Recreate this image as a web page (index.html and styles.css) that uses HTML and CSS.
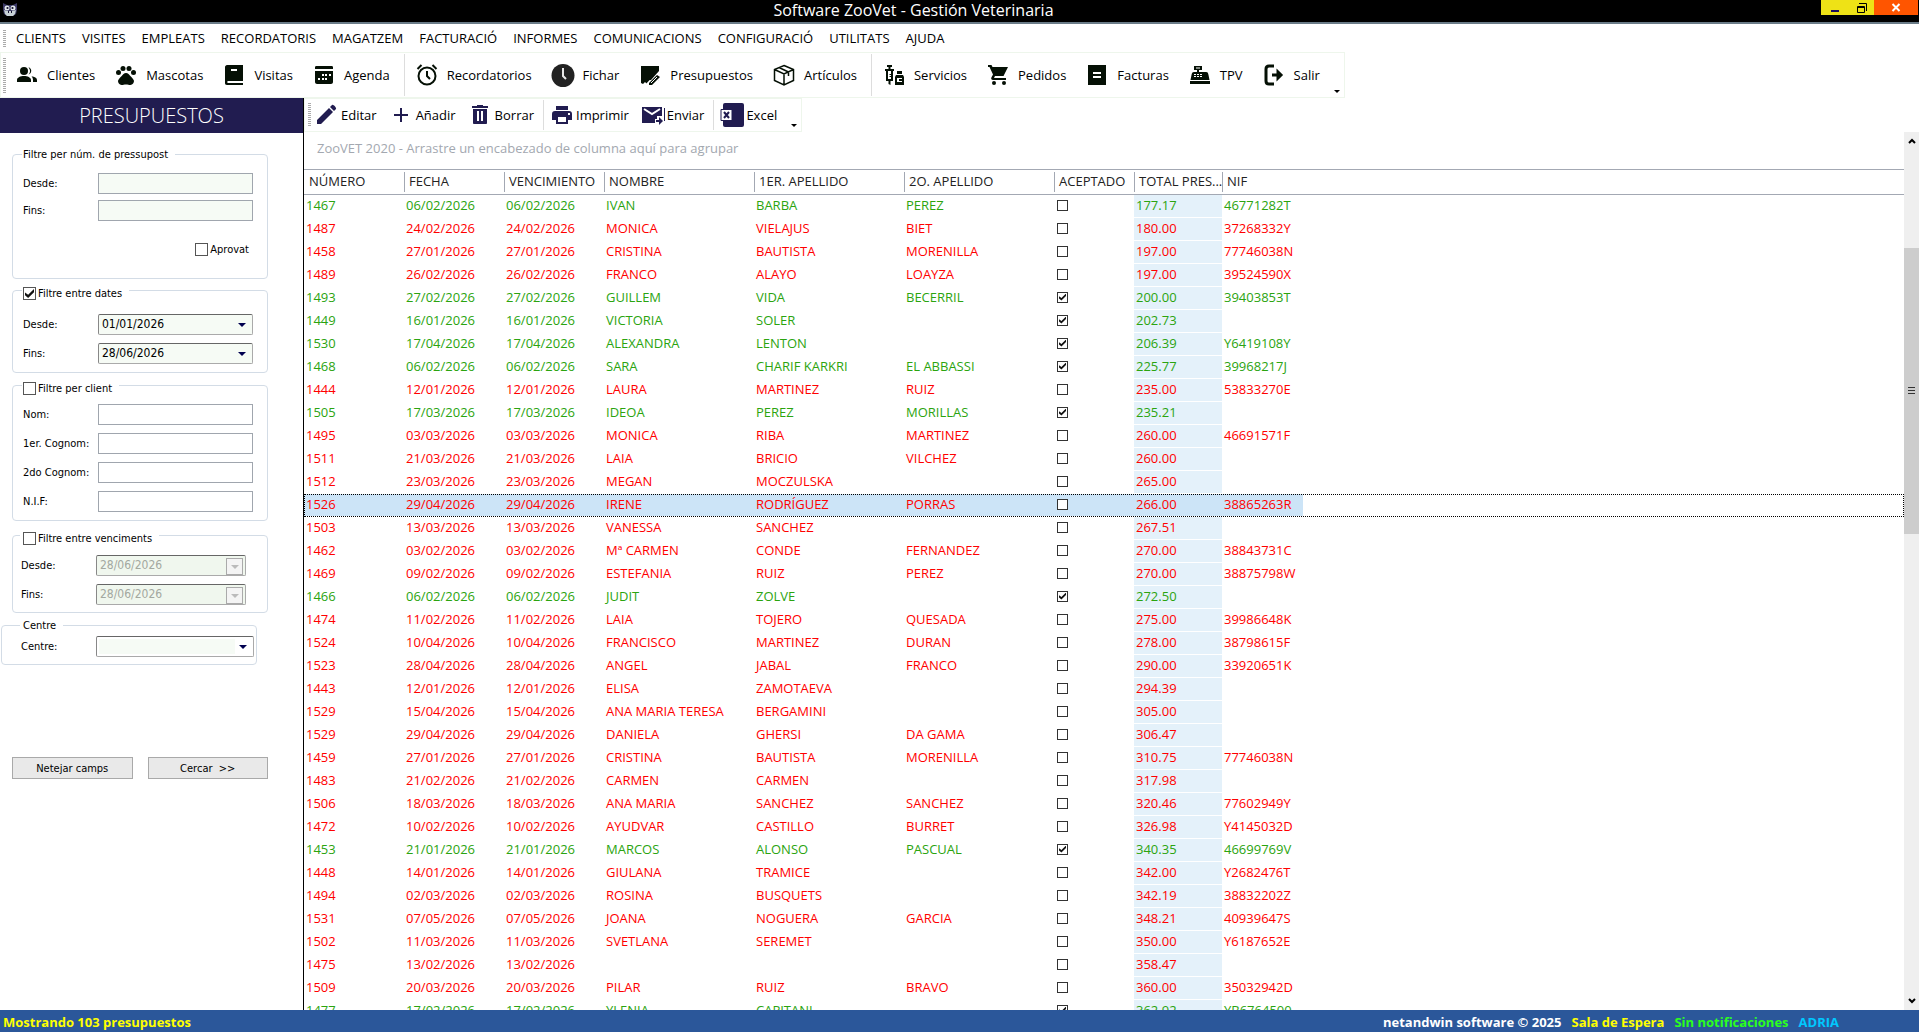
FILE: index.html
```html
<!DOCTYPE html>
<html lang="ca">
<head>
	<meta charset="utf-8">
	<title>Software ZooVet - Gestión Veterinaria</title>
	<link rel="stylesheet" href="styles.css">
</head>

<body>
	<header class="titlebar">
		<svg class="logo" viewBox="0 0 16 16">
			<path fill="#3c3a66" d="M1 2l4 2h6l4-2v7l-1 4-3 2H5l-3-2-1-4z"/>
			<path fill="#c9d2d6" d="M2 9l3 1h6l3-1-1 4-2 2H5l-2-2z"/>
			<circle cx="5" cy="7" r="2.500" fill="#e4eaec"/>
			<circle cx="11" cy="7" r="2.500" fill="#e4eaec"/>
			<circle cx="5.500" cy="7" r="1.100" fill="#15132f"/>
			<circle cx="10.500" cy="7" r="1.100" fill="#15132f"/>
			<path fill="#15132f" d="M6 10h1v2H6zM9 10h1v2H9z"/>
		</svg>
		<h1>Software ZooVet - Gestión Veterinaria</h1>
		<div class="window-buttons">
			<button type="button" class="win-min" aria-label="Minimizar">
				<svg viewBox="0 0 12 12"><path fill="#1c0f5c" d="M2 8h8v2H2z"/></svg>
			</button>
			<button type="button" class="win-max" aria-label="Restaurar">
				<svg viewBox="0 0 12 12"><path fill="none" stroke="#000" d="M3 1.500h7.500V9M1.500 4.500h7v6h-7zM1 5.500h8"/></svg>
			</button>
			<button type="button" class="win-close" aria-label="Cerrar">
				<svg viewBox="0 0 12 12"><path fill="none" stroke="#fff" stroke-width="2" d="M2.500 2l7 7M9.500 2l-7 7"/></svg>
			</button>
		</div>
	</header>

	<nav class="menu">
		<span class="grip"></span>
		<a href="#">CLIENTS</a>
		<a href="#">VISITES</a>
		<a href="#">EMPLEATS</a>
		<a href="#">RECORDATORIS</a>
		<a href="#">MAGATZEM</a>
		<a href="#">FACTURACIÓ</a>
		<a href="#">INFORMES</a>
		<a href="#">COMUNICACIONS</a>
		<a href="#">CONFIGURACIÓ</a>
		<a href="#">UTILITATS</a>
		<a href="#">AJUDA</a>
	</nav>

	<div class="toolbar main-toolbar">
		<span class="grip"></span>
		<button type="button">
			<svg viewBox="0 0 24 24"><circle cx="9" cy="8" r="4"/><path d="M13.500 4.200a4 4 0 0 1 0 7.600 6 6 0 0 0 0-7.600zM2 19v-2c0-2.500 3.500-4 7-4s7 1.500 7 4v2zM16.500 13.200c3 .4 5.500 1.600 5.500 3.800v2h-4v-2c0-1.600-.6-2.800-1.500-3.800z"/></svg>
			Clientes
		</button>
		<button type="button">
			<svg viewBox="0 0 24 24"><circle cx="4.500" cy="9.500" r="2.500"/><circle cx="9" cy="5.500" r="2.500"/><circle cx="15" cy="5.500" r="2.500"/><circle cx="19.500" cy="9.500" r="2.500"/><path d="M12 10c2 0 3.200 1.600 4.300 2.900 1.300 1.500 3.200 2.800 3.600 4.700.4 2.200-1.300 4.400-3.500 4.400-1.500 0-2.600-.5-4.400-.5s-2.900.5-4.400.5c-2.200 0-3.900-2.200-3.500-4.400.4-1.900 2.300-3.200 3.600-4.700C8.800 11.600 10 10 12 10z"/></svg>
			Mascotas
		</button>
		<button type="button">
			<svg viewBox="0 0 24 24"><path fill-rule="evenodd" d="M5 2h16v16H6c-1 0-1 2 0 2h15v2H5c-1.500 0-2-1-2-2V4c0-1 1-2 2-2zM9 6v2h6V6z"/></svg>
			Visitas
		</button>
		<button type="button">
			<svg viewBox="0 0 24 24"><path fill-rule="evenodd" d="M3 6V4c0-1 1-1 2-1h14c1 0 2 0 2 1v2zM3 8h18v11c0 1-1 2-2 2H5c-1 0-2-1-2-2zM10 11v2h2v-2zM13 11v2h2v-2zM17 11v2h2v-2zM6 15v2h2v-2zM10 15v2h2v-2zM13 15v2h2v-2z"/></svg>
			Agenda
		</button>
		<span class="sep"></span>
		<button type="button">
			<svg viewBox="0 0 24 24" class="line"><circle cx="12" cy="13" r="8.500"/><path d="M12 8v5l3 3M2.500 6l4-4M21.500 6l-4-4"/></svg>
			Recordatorios
		</button>
		<button type="button">
			<svg viewBox="0 0 24 24"><circle cx="12" cy="12.500" r="11.500" fill="#222"/><path fill="none" stroke="#e8e8e8" stroke-width="2" d="M12 5v8l3 3"/></svg>
			Fichar
		</button>
		<button type="button">
			<svg viewBox="0 0 24 24"><path d="M3 3h18v14l-8 4-2-1-2 1-2-2-2 2-2-1z"/><path fill="none" stroke="#fff" stroke-width="7" d="M23 10L10 24"/><path d="M19 12l3 2-8 8h-3v-2zM3 3h18v5l-8 9H3z"/><path fill="none" stroke="#fff" d="M13 20l6-6"/></svg>
			Presupuestos
		</button>
		<button type="button">
			<svg viewBox="0 0 24 24" class="line thin"><path d="M12 2.500l9.500 4v11L12 22l-9.500-4.500v-11zM2.500 6.500L12 11l9.500-4.500M12 11v11M7 4.500l9.500 4.500v4"/></svg>
			Artículos
		</button>
		<span class="sep"></span>
		<button type="button">
			<svg viewBox="0 0 24 24"><path fill-rule="evenodd" d="M5 2h5v2H8.500v2H12v2h-1v10H8.500v4l-2-1v-3H4V8H3V6h3.500V4H5zM6 8v8h3v-2H7.500v-1H9v-1H7.500v-1H9V8zM15 8h5v3h-5zM14 12h7l1 2v8h-9v-8zM15 15v4h5v-1h-3v-2h3v-1z"/></svg>
			Servicios
		</button>
		<button type="button">
			<svg viewBox="0 0 24 24"><circle cx="8" cy="20" r="2"/><circle cx="18" cy="20" r="2"/><path d="M2 2h3.500l1 2H22l-4.500 9H9l-1 2h12v2H7c-1.500 0-2.300-1.500-1.500-2.800L7 11.500 3.500 4H2z"/></svg>
			Pedidos
		</button>
		<button type="button">
			<svg viewBox="0 0 24 24"><path fill-rule="evenodd" d="M3 2h18v20H3zM8 9v2h8V9zM8 13v2h8v-2z"/></svg>
			Facturas
		</button>
		<button type="button">
			<svg viewBox="0 0 24 24"><path fill-rule="evenodd" d="M2 18h20v3H2zM6 3h8v4h-3v2h7c2 0 2 1 2.500 3l1 5h-19l1-5c.4-2 .8-3 2.500-3h3V7H6zM8 4.500v1h4v-1zM6 11v1h2v-1zM9 11v1h2v-1zM12 11v1h2v-1zM6 13v1h2v-1zM9 13v1h2v-1zM12 13v1h2v-1z"/></svg>
			TPV
		</button>
		<button type="button">
			<svg viewBox="0 0 24 24" class="line bold"><path d="M12 3H7C5 3 4 4 4 6v12c0 2 1 3 3 3h5M10 12h8M16 9l3 3-3 3z"/></svg>
			Salir
		</button>
		<span class="overflow"></span>
	</div>

	<main>
		<aside>
			<h2>PRESUPUESTOS</h2>
			<form>
				<fieldset class="numbers">
					<legend>Filtre per núm. de pressupost</legend>
					<div class="field">
						<label for="num_desde">Desde:</label>
						<input type="text" id="num_desde">
					</div>
					<div class="field">
						<label for="num_fins">Fins:</label>
						<input type="text" id="num_fins">
					</div>
					<div class="approved">
						<input type="checkbox" id="aprovat">
						<label for="aprovat">Aprovat</label>
					</div>
				</fieldset>

				<fieldset class="dates">
					<legend class="check">
						<input type="checkbox" id="f_dates" checked>
						<label for="f_dates">Filtre entre dates</label>
					</legend>
					<div class="field">
						<label for="data_desde">Desde:</label>
						<span class="combo"><select id="data_desde"><option>01/01/2026</option></select></span>
					</div>
					<div class="field">
						<label for="data_fins">Fins:</label>
						<span class="combo"><select id="data_fins"><option>28/06/2026</option></select></span>
					</div>
				</fieldset>

				<fieldset class="client">
					<legend class="check">
						<input type="checkbox" id="f_client">
						<label for="f_client">Filtre per client</label>
					</legend>
					<div class="field">
						<label for="nom">Nom:</label>
						<input type="text" id="nom">
					</div>
					<div class="field">
						<label for="cognom1">1er. Cognom:</label>
						<input type="text" id="cognom1">
					</div>
					<div class="field">
						<label for="cognom2">2do Cognom:</label>
						<input type="text" id="cognom2">
					</div>
					<div class="field">
						<label for="nif">N.I.F:</label>
						<input type="text" id="nif">
					</div>
				</fieldset>

				<fieldset class="due">
					<legend class="check">
						<input type="checkbox" id="f_venc">
						<label for="f_venc">Filtre entre venciments</label>
					</legend>
					<div class="field">
						<label for="venc_desde">Desde:</label>
						<span class="combo off"><select id="venc_desde" disabled><option>28/06/2026</option></select></span>
					</div>
					<div class="field">
						<label for="venc_fins">Fins:</label>
						<span class="combo off"><select id="venc_fins" disabled><option>28/06/2026</option></select></span>
					</div>
				</fieldset>

				<fieldset class="centre">
					<legend>Centre</legend>
					<div class="field">
						<label for="centre">Centre:</label>
						<span class="combo"><select id="centre"><option></option></select></span>
					</div>
				</fieldset>

				<div class="actions">
					<button type="reset">Netejar camps</button>
					<button type="button">Cercar &nbsp;&gt;&gt;</button>
				</div>
			</form>
		</aside>

		<section class="content">
			<div class="toolbar sub-toolbar">
				<span class="grip"></span>
				<button type="button">
					<svg viewBox="0 0 24 24"><path d="M3 17L15 5l4 4L7 21H3zM16 4l2-2c1-1 5 3 4 4l-2 2z"/></svg>
					Editar
				</button>
				<button type="button">
					<svg viewBox="0 0 24 24"><path d="M11 5h2v6h6v2h-6v6h-2v-6H5v-2h6z"/></svg>
					Añadir
				</button>
				<button type="button">
					<svg viewBox="0 0 24 24"><path fill-rule="evenodd" d="M4 3h5V2h6v1h5v2H4zM5 6h14v14c0 1-1 1-1 1H6s-1 0-1-1zM9 8v10h2V8zM13 8v10h2V8z"/></svg>
					Borrar
				</button>
				<span class="sep"></span>
				<button type="button" class="tight">
					<svg viewBox="0 0 24 24"><path fill-rule="evenodd" d="M6 3h12v4H6zM5 8h14c2 0 3 1 3 3v6h-4v4H6v-4H2v-6c0-2 1-3 3-3zM8 14v5h8v-5zM18 10v2h2v-2z"/></svg>
					Imprimir
				</button>
				<button type="button" class="tight">
					<svg viewBox="0 0 24 24"><path d="M1 4h20v9h-5v3h-2v4H1z"/><path fill="none" stroke="#fff" stroke-width="2" d="M3 6l8 5 8-5"/><path d="M15 17h3v-3l4 4-4 4v-3h-3zM23 5h1v13h-1z"/></svg>
					Enviar
				</button>
				<span class="sep"></span>
				<button type="button" class="tight">
					<svg viewBox="0 0 24 24"><rect x="3" width="21" height="24" rx="2"/><path fill="#fff" stroke="#211c50" d="M1 6.500h11v11H1z"/><path stroke="#211c50" stroke-width="2" d="M4 9l5 6M9 9l-5 6"/></svg>
					Excel
				</button>
				<span class="overflow"></span>
			</div>

			<div class="grid">
				<div class="grid-body">
					<p class="group-hint">ZooVET 2020 - Arrastre un encabezado de columna aquí para agrupar</p>
					<table>
						<colgroup>
							<col class="c-date"><col class="c-date"><col class="c-date">
							<col class="c-name"><col class="c-name"><col class="c-name">
							<col class="c-ok"><col class="c-total"><col class="c-nif"><col>
						</colgroup>
						<thead>
							<tr>
								<th>NÚMERO</th>
								<th>FECHA</th>
								<th>VENCIMIENTO</th>
								<th>NOMBRE</th>
								<th>1ER. APELLIDO</th>
								<th>2O. APELLIDO</th>
								<th>ACEPTADO</th>
								<th>TOTAL PRES...</th>
								<th>NIF</th>
								<th></th>
							</tr>
						</thead>
						<tbody id="rows"></tbody>
					</table>
				</div>
				<div class="scrollbar">
					<svg viewBox="0 0 8 6"><path d="M1 5l3-3 3 3"/></svg>
					<div class="thumb"><span></span></div>
					<svg viewBox="0 0 8 6"><path d="M1 1l3 3 3-3"/></svg>
				</div>
			</div>
		</section>
	</main>

	<footer>
		<span class="count">Mostrando 103 presupuestos</span>
		<span>netandwin software © 2025</span>
		<span class="yellow">Sala de Espera</span>
		<span class="green">Sin notificaciones</span>
		<span class="cyan">ADRIA</span>
	</footer>
	<script src="rows.js"></script>
</body>
</html>
```

FILE: styles.css
```css
* {
	box-sizing: border-box;
}

body {
	display: flex;
	flex-direction: column;
	height: 100vh;
	margin: 0;
	overflow: hidden;
	background: #fff;
	color: #000;
	font-family: "Open Sans", "Noto Sans", sans-serif;
	font-size: 13px;
}

button, input, select {
	font: inherit;
	color: inherit;
	margin: 0;
}

/* title bar */
.titlebar {
	position: relative;
	display: flex;
	justify-content: center;
	flex: none;
	height: 24px;
	padding-right: 92px;
	background: #000;
	border-bottom: 2px solid #6b7c88;
	color: #fff;
}

.titlebar h1 {
	margin: 0;
	font-size: 16px;
	font-weight: normal;
	line-height: 20px;
}

.logo {
	position: absolute;
	left: 2px;
	top: 1px;
	width: 16px;
	height: 16px;
}

.window-buttons {
	position: absolute;
	top: 0;
	right: 1px;
	display: flex;
}

.window-buttons button {
	display: flex;
	align-items: center;
	justify-content: center;
	height: 15px;
	padding: 0;
	border: none;
	background: #eee216;
}

.window-buttons svg {
	width: 12px;
	height: 12px;
}

.window-buttons .win-min {
	width: 28px;
}

.window-buttons .win-max {
	width: 25px;
}

.window-buttons .win-close {
	width: 44px;
	background: #ff5500;
}

/* menu */
.menu {
	display: flex;
	align-items: center;
	flex: none;
	gap: 16px;
	height: 28px;
	padding-left: 3px;
}

.menu a {
	color: #000;
	text-decoration: none;
}

.grip {
	flex: none;
	width: 3px;
	height: 17px;
	background: repeating-linear-gradient(#aaa 0 1px, #fff 1px 2px);
}

.menu .grip {
	margin-right: -6px;
}

/* toolbars */
.toolbar {
	display: flex;
	align-items: center;
	flex: none;
	align-self: flex-start;
	border: 1px solid #eef6ec;
}

.toolbar button {
	display: flex;
	align-items: center;
	gap: 8px;
	padding: 0 9px 0 10px;
	border: none;
	background: none;
	white-space: nowrap;
}

.toolbar svg {
	width: 24px;
	height: 24px;
	fill: #051005;
}

.toolbar svg.line {
	fill: none;
	stroke: #051005;
	stroke-width: 2;
}

.toolbar svg.thin {
	stroke-width: 1.5;
}

.toolbar svg.bold {
	stroke-width: 3;
}

.main-toolbar {
	height: 46px;
	padding: 0 4px 0 2px;
}

.main-toolbar .grip {
	height: 35px;
	margin-right: -1px;
}

.sep {
	align-self: stretch;
	width: 1px;
	margin: 1px 0 1px 5px;
	background: #ddd;
}

.overflow {
	align-self: flex-end;
	margin: 0 0 4px 5px;
	border: 3px solid transparent;
	border-top-color: #000;
	border-bottom: none;
}

.sub-toolbar {
	height: 34px;
	padding: 0 4px 0 3px;
}

.sub-toolbar .grip {
	height: 24px;
	margin-right: -3px;
}

.sub-toolbar button {
	gap: 3px;
	padding: 0 6px;
}

.sub-toolbar button.tight {
	gap: 2px;
}

.sub-toolbar .sep {
	margin-left: 3px;
}

.sub-toolbar .overflow {
	margin-left: 8px;
}

.sub-toolbar svg {
	fill: #211c50;
}

/* filters */
main {
	display: flex;
	flex: 1;
	min-height: 0;
}

aside {
	flex: none;
	width: 304px;
	border-right: 1px solid #000;
	font-family: "DejaVu Sans Condensed", "DejaVu Sans", sans-serif;
	font-size: 11px;
	line-height: 15px;
}

aside h2 {
	margin: 0;
	background: #211c50;
	color: #fff;
	font-family: "Open Sans", sans-serif;
	font-size: 20px;
	font-weight: 300;
	line-height: 35px;
	text-align: center;
}

form {
	display: flex;
	flex-direction: column;
	padding-top: 14px;
}

fieldset {
	width: 256px;
	margin: 0 0 0 12px;
	padding: 0 14px 10px 9px;
	border: 1px solid #d3dce6;
	border-radius: 4px;
}

legend {
	padding: 0 7px 0 1px;
}

legend.check,
.approved {
	display: flex;
	align-items: center;
	gap: 2px;
}

legend.check {
	padding-top: 6px;
}

.field {
	display: flex;
	align-items: center;
	height: 29px;
}

.field label {
	width: 76px;
	flex: none;
	padding-left: 1px;
	white-space: nowrap;
}

.field input,
.combo {
	flex: 1;
	min-width: 0;
	height: 21px;
	border: 1px solid #a0a6ae;
	background: #f6fbf5;
}

.combo {
	position: relative;
	border-color: #666 #aaa #aaa #888;
	border-radius: 2px;
}

.combo select {
	display: block;
	width: 100%;
	height: 100%;
	padding: 0 3px;
	border: none;
	background: none;
	font-size: 12px;
	appearance: none;
}

.combo::after {
	content: "";
	position: absolute;
	right: 6px;
	top: 8px;
	border: 4px solid transparent;
	border-top-color: #000050;
	border-bottom: none;
}

.combo.off {
	background: #f0f7ee;
}

.combo.off select {
	color: #a3a8a0;
	opacity: 1;
}

.combo.off::after {
	right: 2px;
	top: 2px;
	width: 15px;
	height: 15px;
	border: 1px solid #aaa;
	background: url("data:image/svg+xml,%3Csvg xmlns='http://www.w3.org/2000/svg' viewBox='0 0 8 4'%3E%3Cpath fill='%23bbb' d='M0 0h8L4 4z'/%3E%3C/svg%3E") center / 8px 4px no-repeat #f4f4f4;
}

.numbers {
	height: 132px;
	padding-top: 8px;
}

.numbers .field {
	height: 27px;
}

.approved {
	justify-content: flex-end;
	margin: 18px 4px 0 0;
}

.dates {
	padding-top: 9px;
	height: 93px;
	margin-top: 1px;
}

.client {
	padding-top: 4px;
	height: 146px;
	margin-top: 2px;
}

.client input[type=text] {
	background: #fff;
}

.due {
	padding: 5px 21px 0 7px;
	height: 88px;
	margin-top: 4px;
}

.due legend {
	padding-left: 3px;
}

.centre {
	margin: 5px 0 0 1px;
	padding: 0 2px 4px 18px;
}

.centre .field {
	height: 27px;
}

.centre legend {
	padding-left: 3px;
}

.centre .combo {
	background: #fff;
}

.centre select {
	background: linear-gradient(#f6fbf5, #f6fbf5) 2px 2px / 136px 15px no-repeat;
}

.actions {
	display: flex;
	gap: 15px;
	width: 256px;
	margin: 92px 0 0 12px;
}

.actions button {
	flex: 1;
	height: 22px;
	padding: 0;
	border: 1px solid #a9a9a9;
	background: #e9e9e9;
}

input[type=checkbox] {
	display: grid;
	place-content: center;
	flex: none;
	width: 13px;
	height: 13px;
	border: 1px solid #555;
	background: #fff;
	appearance: none;
}

input[type=checkbox]:checked::before {
	content: "";
	width: 9px;
	height: 9px;
	background: #111;
	clip-path: polygon(0 40%, 35% 65%, 100% 0, 100% 35%, 35% 100%, 0 70%);
}

/* budgets grid */
.content {
	display: flex;
	flex-direction: column;
	flex: 1;
	min-width: 0;
}

.grid {
	display: flex;
	flex: 1;
	min-height: 0;
}

.grid-body {
	flex: 1;
	min-width: 0;
	overflow: hidden;
}

.group-hint {
	margin: 0;
	padding-left: 13px;
	height: 37px;
	color: #a3a8b0;
	line-height: 33px;
}

table {
	width: 100%;
	table-layout: fixed;
	border-collapse: separate;
	border-spacing: 0;
}

.c-date {
	width: 100px;
}

.c-name {
	width: 150px;
}

.c-ok {
	width: 80px;
}

.c-total {
	width: 88px;
}

.c-nif {
	width: 81px;
}

th {
	height: 26px;
	padding: 0 0 2px 5px;
	border-top: 1px solid #a3a8b3;
	border-bottom: 1px solid #a3a8b3;
	background: linear-gradient(#a3a8b3, #a3a8b3) left center / 1px 20px no-repeat;
	color: #222;
	font-weight: normal;
	line-height: 20px;
	text-align: left;
	white-space: nowrap;
}

th:first-child,
th:last-child {
	background: none;
}

td {
	height: 23px;
	padding: 0 0 2px 2px;
	border-bottom: 1px solid #fff;
	color: #f00;
	line-height: 20px;
	white-space: nowrap;
}

.accepted td {
	color: #2ba40f;
}

td:nth-child(8) {
	background: #e4f1fa;
}

.selected {
	outline: 1px dotted #000;
	outline-offset: -1px;
}

.selected td:not(:last-child) {
	background: #cce4f7;
}

td input[type=checkbox] {
	width: 11px;
	height: 11px;
	margin-left: 1px;
	border-color: #333;
}

td input[type=checkbox]:checked::before {
	width: 7px;
	height: 7px;
}

.scrollbar {
	display: flex;
	flex-direction: column;
	align-items: center;
	flex: none;
	width: 15px;
	padding: 6px 0;
	background: #efefef;
}

.scrollbar svg {
	flex: none;
	width: 8px;
	height: 6px;
	fill: none;
	stroke: #000;
	stroke-width: 2;
}

.thumb {
	display: flex;
	align-items: center;
	justify-content: center;
	width: 100%;
	height: 33%;
	margin: 104px 0 auto;
	background: #cdcdcd;
}

.thumb span {
	width: 7px;
	height: 7px;
	background: repeating-linear-gradient(#333 0 1px, transparent 1px 3px);
}

/* status bar */
footer {
	display: flex;
	align-items: center;
	flex: none;
	gap: 10px;
	height: 22px;
	padding: 2px 80px 0 3px;
	background: #2b579a;
	color: #fff;
	font-weight: bold;
}

.count {
	margin-right: auto;
}

.count,
.yellow {
	color: #ff0;
}

.green {
	color: #2bff1c;
}

.cyan {
	color: #00c8ff;
}
```

FILE: rows.js
```js
// numero, fecha, vencimiento, nombre, apellido 1, apellido 2, aceptado, total, nif, verde
var budgets = [
	["1467", "06/02/2026", "06/02/2026", "IVAN", "BARBA", "PEREZ", 0, "177.17", "46771282T", 1],
	["1487", "24/02/2026", "24/02/2026", "MONICA", "VIELAJUS", "BIET", 0, "180.00", "37268332Y", 0],
	["1458", "27/01/2026", "27/01/2026", "CRISTINA", "BAUTISTA", "MORENILLA", 0, "197.00", "77746038N", 0],
	["1489", "26/02/2026", "26/02/2026", "FRANCO", "ALAYO", "LOAYZA", 0, "197.00", "39524590X", 0],
	["1493", "27/02/2026", "27/02/2026", "GUILLEM", "VIDA", "BECERRIL", 1, "200.00", "39403853T", 1],
	["1449", "16/01/2026", "16/01/2026", "VICTORIA", "SOLER", "", 1, "202.73", "", 1],
	["1530", "17/04/2026", "17/04/2026", "ALEXANDRA", "LENTON", "", 1, "206.39", "Y6419108Y", 1],
	["1468", "06/02/2026", "06/02/2026", "SARA", "CHARIF KARKRI", "EL ABBASSI", 1, "225.77", "39968217J", 1],
	["1444", "12/01/2026", "12/01/2026", "LAURA", "MARTINEZ", "RUIZ", 0, "235.00", "53833270E", 0],
	["1505", "17/03/2026", "17/03/2026", "IDEOA", "PEREZ", "MORILLAS", 1, "235.21", "", 1],
	["1495", "03/03/2026", "03/03/2026", "MONICA", "RIBA", "MARTINEZ", 0, "260.00", "46691571F", 0],
	["1511", "21/03/2026", "21/03/2026", "LAIA", "BRICIO", "VILCHEZ", 0, "260.00", "", 0],
	["1512", "23/03/2026", "23/03/2026", "MEGAN", "MOCZULSKA", "", 0, "265.00", "", 0],
	["1526", "29/04/2026", "29/04/2026", "IRENE", "RODRÍGUEZ", "PORRAS", 0, "266.00", "38865263R", 0],
	["1503", "13/03/2026", "13/03/2026", "VANESSA", "SANCHEZ", "", 0, "267.51", "", 0],
	["1462", "03/02/2026", "03/02/2026", "Mª CARMEN", "CONDE", "FERNANDEZ", 0, "270.00", "38843731C", 0],
	["1469", "09/02/2026", "09/02/2026", "ESTEFANIA", "RUIZ", "PEREZ", 0, "270.00", "38875798W", 0],
	["1466", "06/02/2026", "06/02/2026", "JUDIT", "ZOLVE", "", 1, "272.50", "", 1],
	["1474", "11/02/2026", "11/02/2026", "LAIA", "TOJERO", "QUESADA", 0, "275.00", "39986648K", 0],
	["1524", "10/04/2026", "10/04/2026", "FRANCISCO", "MARTINEZ", "DURAN", 0, "278.00", "38798615F", 0],
	["1523", "28/04/2026", "28/04/2026", "ANGEL", "JABAL", "FRANCO", 0, "290.00", "33920651K", 0],
	["1443", "12/01/2026", "12/01/2026", "ELISA", "ZAMOTAEVA", "", 0, "294.39", "", 0],
	["1529", "15/04/2026", "15/04/2026", "ANA MARIA TERESA", "BERGAMINI", "", 0, "305.00", "", 0],
	["1529", "29/04/2026", "29/04/2026", "DANIELA", "GHERSI", "DA GAMA", 0, "306.47", "", 0],
	["1459", "27/01/2026", "27/01/2026", "CRISTINA", "BAUTISTA", "MORENILLA", 0, "310.75", "77746038N", 0],
	["1483", "21/02/2026", "21/02/2026", "CARMEN", "CARMEN", "", 0, "317.98", "", 0],
	["1506", "18/03/2026", "18/03/2026", "ANA MARIA", "SANCHEZ", "SANCHEZ", 0, "320.46", "77602949Y", 0],
	["1472", "10/02/2026", "10/02/2026", "AYUDVAR", "CASTILLO", "BURRET", 0, "326.98", "Y4145032D", 0],
	["1453", "21/01/2026", "21/01/2026", "MARCOS", "ALONSO", "PASCUAL", 1, "340.35", "46699769V", 1],
	["1448", "14/01/2026", "14/01/2026", "GIULANA", "TRAMICE", "", 0, "342.00", "Y2682476T", 0],
	["1494", "02/03/2026", "02/03/2026", "ROSINA", "BUSQUETS", "", 0, "342.19", "38832202Z", 0],
	["1531", "07/05/2026", "07/05/2026", "JOANA", "NOGUERA", "GARCIA", 0, "348.21", "40939647S", 0],
	["1502", "11/03/2026", "11/03/2026", "SVETLANA", "SEREMET", "", 0, "350.00", "Y6187652E", 0],
	["1475", "13/02/2026", "13/02/2026", "", "", "", 0, "358.47", "", 0],
	["1509", "20/03/2026", "20/03/2026", "PILAR", "RUIZ", "BRAVO", 0, "360.00", "35032942D", 0],
	["1477", "17/02/2026", "17/02/2026", "YLENIA", "CAPITANI", "", 1, "362.92", "YB6764500", 1]
];

var body = document.getElementById("rows");
budgets.forEach(function(b) {
	var tr = body.insertRow();
	if (b[9]) tr.classList.add("accepted");
	if (b[0] == "1526") tr.classList.add("selected");
	for (var i = 0; i < 9; i++) {
		var td = tr.insertCell();
		if (i == 6) {
			var box = document.createElement("input");
			box.type = "checkbox";
			box.checked = b[6] == 1;
			box.setAttribute("aria-label", "Aceptado " + b[0]);
			td.appendChild(box);
		} else {
			td.textContent = b[i];
		}
	}
	tr.insertCell();
});
```
